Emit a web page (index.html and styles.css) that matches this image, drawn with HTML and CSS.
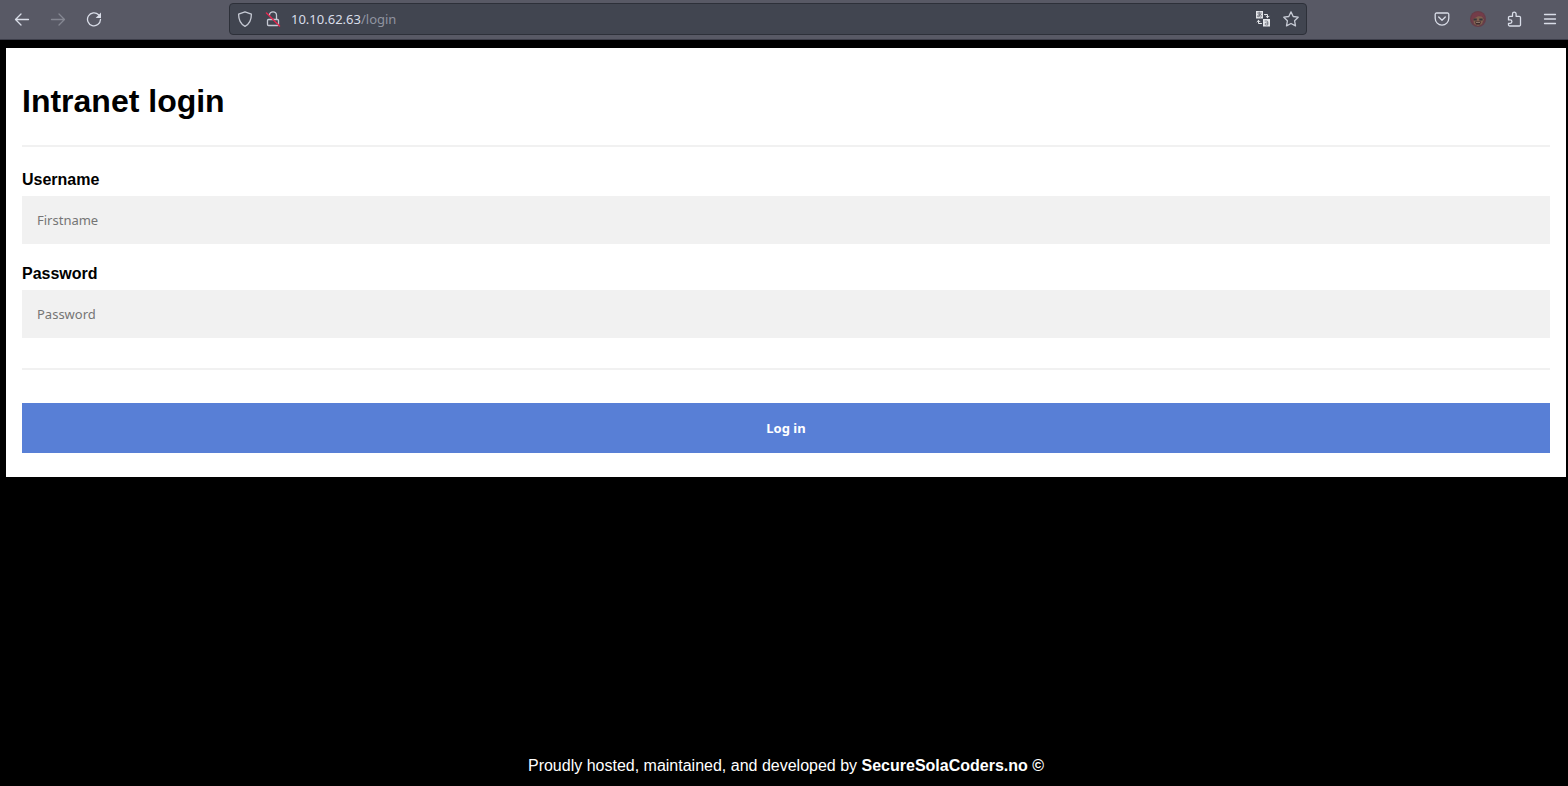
FILE: index.html
```html
<!DOCTYPE html>
<html lang="en">
<head>
    <meta charset="UTF-8">
    <meta name="viewport" content="width=device-width, initial-scale=1.0">
    <title>Intranet login</title>
    <link rel="stylesheet" href="styles.css">
</head>
<body>

<header class="toolbar">
    <nav class="nav-buttons">
        <button class="tool" type="button" aria-label="Back">
            <svg viewBox="0 0 16 16"><path d="M14.500 8.500H1.500M7 3 1.500 8.500 7 14"/></svg>
        </button>
        <button class="tool" type="button" aria-label="Forward" disabled>
            <svg viewBox="0 0 16 16"><path d="M1.500 8.500h13M9 3l5.500 5.500L9 14"/></svg>
        </button>
        <button class="tool" type="button" aria-label="Reload">
            <svg viewBox="0 0 16 16"><path d="M12.600 3.700A6.500 6.500 0 1 0 14.500 8.500"/><path class="solid" d="M15 1.500v5.500H9.700z"/></svg>
        </button>
    </nav>
    <div class="urlbar">
        <button class="url-icon" type="button" aria-label="Tracking protection">
            <svg viewBox="0 0 16 16"><path d="M8 .8 14.4 3.2C14.4 8.6 12.4 13 8 15.3 3.6 13 1.6 8.6 1.6 3.2z"/></svg>
        </button>
        <button class="url-icon" type="button" aria-label="Connection not secure">
            <svg viewBox="0 0 16 16"><path d="M4.500 4.300a3.500 3.500 0 0 1 7 0V8.500M3.500 8.500h9a1 1 0 0 1 1 1v4a1 1 0 0 1-1 1h-9a1 1 0 0 1-1-1v-4a1 1 0 0 1 1-1z"/><path class="slash" d="M1.500 2 14.500 15"/></svg>
        </button>
        <div class="address">10.10.62.63<span>/login</span></div>
        <button class="url-icon" type="button" aria-label="Translate page">
            <svg class="translate" viewBox="0 0 16 16">
                <path class="solid" d="M1 0h7v7.500H1zM8 8h7v7.500H8z"/>
                <path d="M9.500 3.500h3V6.500M11 5.200l1.500 1.500L14 5.200M6.500 12.500h-3V9.500M2 10.800 3.500 9.300 5 10.800"/>
                <path class="cutout" d="M2.500 2h4M4.200 1v4.500M5.600 3C5 5 3.500 6.300 2.600 5.600S3.500 3.500 5.500 3.900 6.300 6 5.300 6.300M10 10h1.800c.7 0 1 .3 1 1v3h-1.600c-1.600 0-1.600-1.900 0-1.900h1.600"/>
            </svg>
        </button>
        <button class="url-icon" type="button" aria-label="Bookmark this page">
            <svg viewBox="0 0 16 16"><path d="m8 .9 2.200 4.600 5 .7-3.600 3.600.9 5.100L8 12.500l-4.500 2.400.9-5.100L.8 6.200l5-.7z"/></svg>
        </button>
    </div>
    <div class="extensions">
        <button class="tool" type="button" aria-label="Save to Pocket">
            <svg viewBox="0 0 16 16"><path d="M2.500 2h11a1.300 1.300 0 0 1 1.300 1.300v4a6.800 6.800 0 0 1-13.600 0v-4A1.300 1.300 0 0 1 2.500 2zM4.700 6 8 9.200 11.300 6"/></svg>
        </button>
        <button class="tool" type="button" aria-label="Account">
            <svg class="avatar" viewBox="0 0 16 16">
                <circle cx="8" cy="8" r="8" fill="#663d48"/>
                <path d="M3 7.500 6 5l6 .5 1.800 3-1.800 4.500-4 2-4-2z" fill="#80604f"/>
                <path d="M1 8 3 2.500 8 1l5 1.500L15 8l-2.500-2.500L9 4.500 6 6.500 3.200 7.500 3 12z" fill="#743c49"/>
                <path d="M3.500 7.500h3.300v2H3.500zM9.300 7.500h3.300v2H9.300z" fill="#34363b"/>
                <path d="M5 10.500h6L10 13.500H6z" fill="#3b2a2c"/>
                <path d="M6 11h4v1H6z" fill="#8b756b"/>
            </svg>
        </button>
        <button class="tool" type="button" aria-label="Extensions">
            <svg viewBox="0 0 16 16"><path d="M2.500 7V6.500A1.200 1.200 0 0 1 3.700 5.300H6.500V3a1.800 1.800 0 0 1 3.600 0v2.300h3.200a1.200 1.200 0 0 1 1.200 1.200v7.300a1.200 1.200 0 0 1-1.200 1.200H3.700A1.200 1.200 0 0 1 2.500 13.800v-1.500h1.700a1.700 1.700 0 0 0 0-3.400H2.500z"/></svg>
        </button>
        <button class="tool" type="button" aria-label="Menu">
            <svg viewBox="0 0 16 16"><path d="M2.500 3.500h11M2.500 8h11M2.500 12.500h11"/></svg>
        </button>
    </div>
</header>

<main>
    <form class="container">
        <h1>Intranet login</h1>
        <hr>
        <label for="username">Username</label>
        <input type="text" id="username" name="username" placeholder="Firstname">
        <label for="password">Password</label>
        <input type="password" id="password" name="password" placeholder="Password">
        <hr>
        <button class="login" type="submit">Log in</button>
    </form>
</main>

<footer>Proudly hosted, maintained, and developed by <b>SecureSolaCoders.no ©</b></footer>

</body>
</html>
```
FILE: styles.css
```css
* {
    box-sizing: border-box;
}
body {
    font-family: 'Liberation Sans', Arial, sans-serif;
    font-size: 16px;
    line-height: 18px;
    display: flex;
    flex-direction: column;
    min-height: 100vh;
    margin: 0;
    background-color: #000;
}

/* browser toolbar */
.toolbar {
    display: grid;
    grid-template-columns: 225px 1fr 257px;
    column-gap: 4px;
    align-items: center;
    height: 40px;
    padding-bottom: 1px;
    background-color: #585965;
    border-bottom: 1px solid #3c3d49;
}
.nav-buttons,
.extensions {
    display: flex;
}
.nav-buttons {
    padding-left: 4px;
}
.extensions {
    justify-content: flex-end;
}
.tool,
.url-icon {
    display: flex;
    align-items: center;
    justify-content: center;
    width: 36px;
    height: 32px;
    padding: 0;
    border: none;
    background: none;
    color: #d9dde8;
}
.url-icon {
    width: 28px;
    color: #c6cad4;
}
.tool:disabled {
    color: #858792;
}
svg {
    width: 16px;
    height: 16px;
    fill: none;
    stroke: currentColor;
    stroke-width: 1.3;
    stroke-linecap: round;
    stroke-linejoin: round;
}
.solid {
    fill: currentColor;
    stroke: none;
}
.slash {
    stroke: #e22850;
    stroke-width: 1.5;
}
.translate {
    color: #e4e6ea;
    stroke-width: 1;
}
.cutout {
    stroke: #414550;
    stroke-width: 0.6;
}
.avatar {
    stroke: none;
}
.urlbar {
    display: flex;
    align-items: center;
    height: 32px;
    padding: 0 1px;
    background-color: #414550;
    border: 1px solid #2d3039;
    border-radius: 4px;
}
.address {
    flex: 1;
    padding-left: 4px;
    font-family: 'Noto Sans', sans-serif;
    font-size: 13px;
    color: #d9dde8;
}
.address span {
    color: #9094a0;
}

/* login form */
.container {
    margin: 8px 2px 0 6px;
    padding: 16px 16px 24px;
    background-color: #fff;
}
h1 {
    margin: 19px 0 25px;
    font-size: 32px;
    line-height: 37px;
}
hr {
    margin: 0 0 24px;
    border: 1px solid #f1f1f1;
}
label {
    display: block;
    margin-bottom: 7px;
    font-weight: bold;
}
input {
    display: block;
    width: 100%;
    height: 48px;
    margin-bottom: 21px;
    padding: 15px;
    border: none;
    background: #f1f1f1;
    font-family: 'Noto Sans', sans-serif;
    font-size: 13px;
}
input::placeholder {
    color: #757575;
}
input + hr {
    margin: 30px 0 33px;
}
.login {
    display: block;
    width: 100%;
    height: 50px;
    border: none;
    background-color: #587fd6;
    color: #fff;
    font-family: 'Noto Sans', sans-serif;
    font-size: 13px;
    font-weight: bold;
    cursor: pointer;
}

footer {
    margin-top: auto;
    padding: 0 2px 11px 6px;
    text-align: center;
    color: #fff;
}
```
